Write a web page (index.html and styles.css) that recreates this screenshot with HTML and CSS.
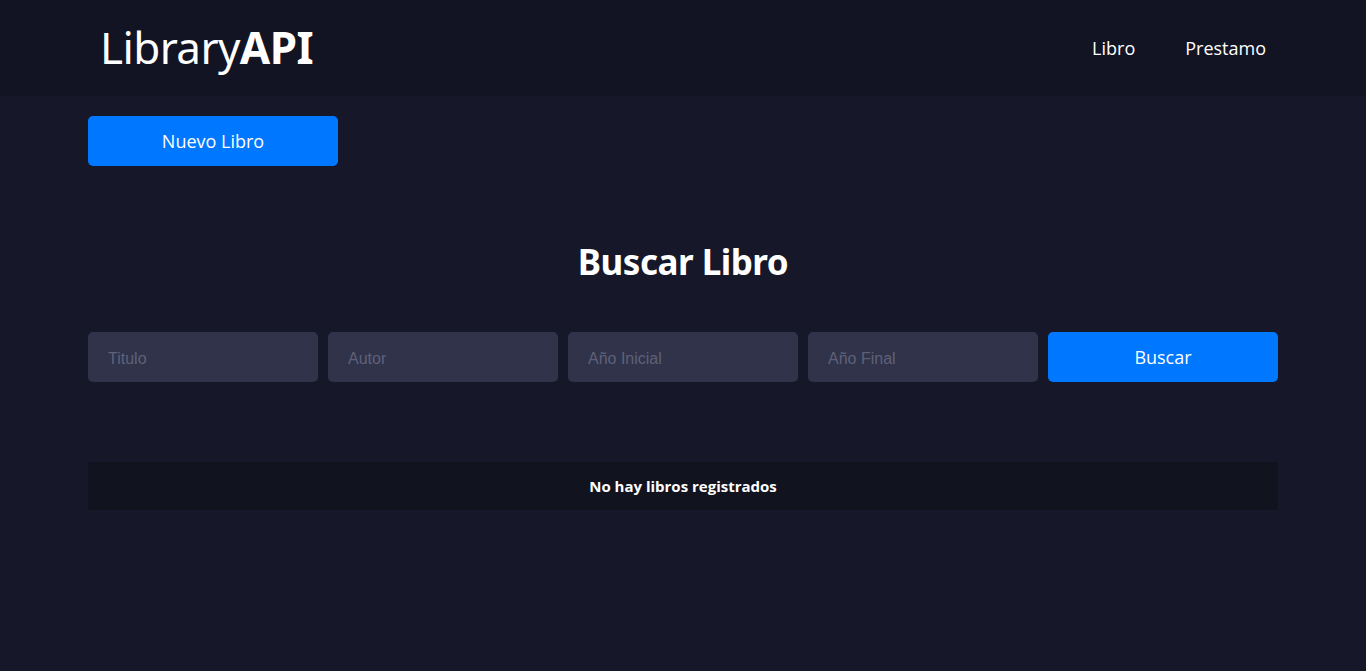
FILE: index.html
```html
<!DOCTYPE html>
<html lang="es">
<head>
<meta charset="utf-8">
<title>LibraryAPI</title>
<link rel="stylesheet" href="styles.css">
</head>
<body>
<header class="topbar">
  <div class="topbar-inner">
    <a class="brand" href="#">Library<b>API</b></a>
    <nav class="nav">
      <a href="#">Libro</a>
      <a href="#">Prestamo</a>
    </nav>
  </div>
</header>
<main class="container">
  <div class="actions">
    <button class="btn btn-primary btn-new">Nuevo Libro</button>
  </div>
  <h1 class="title">Buscar Libro</h1>
  <form class="search">
    <input class="field" type="text" placeholder="Titulo">
    <input class="field" type="text" placeholder="Autor">
    <input class="field" type="text" placeholder="Año Inicial">
    <input class="field" type="text" placeholder="Año Final">
    <button class="btn btn-primary" type="button">Buscar</button>
  </form>
  <table class="results">
    <tbody>
      <tr><td>No hay libros registrados</td></tr>
    </tbody>
  </table>
</main>
</body>
</html>
```
FILE: styles.css
```css
* { box-sizing: border-box; }
html, body { margin: 0; padding: 0; }
body {
  background: #161829;
  color: #fff;
  font-family: "Open Sans", "Liberation Sans", sans-serif;
  min-height: 671px;
}
.topbar {
  background: #121424;
  height: 96px;
}
.topbar-inner {
  width: 1190px;
  margin: 0 auto;
  height: 96px;
  display: flex;
  align-items: center;
  justify-content: space-between;
  padding: 0 12px 0 12px;
}
.brand {
  color: #fff;
  text-decoration: none;
  font-family: "Noto Sans", "Open Sans", sans-serif;
  font-size: 44px;
  font-weight: 400;
  letter-spacing: -0.6px;
  line-height: 1;
  margin-top: -2px;
}
.brand b { font-weight: 700; }
.nav {
  display: flex;
  gap: 50px;
}
.nav a {
  color: #fff;
  text-decoration: none;
  font-size: 18px;
}
.container {
  width: 1190px;
  margin: 0 auto;
  padding-top: 20px;
}
.actions { display: flex; }
.btn {
  border: 0;
  border-radius: 5px;
  height: 50px;
  font-family: "Open Sans", sans-serif;
  font-size: 18px;
  color: #fff;
  cursor: pointer;
  width: 100%;
}
.btn-primary { background: #0077ff; }
.btn-new { width: 250px; }
.title {
  margin: 72px 0 0;
  text-align: center;
  font-family: "Noto Sans", "Open Sans", sans-serif;
  font-size: 35px;
  font-weight: 700;
  line-height: 48px;
  letter-spacing: -0.5px;
}
.search {
  margin-top: 46px;
  display: grid;
  grid-template-columns: repeat(5, minmax(0, 1fr));
  gap: 10px;
}
.field {
  width: 100%;
  min-width: 0;
  height: 50px;
  border: 0;
  border-radius: 5px;
  background: #30334a;
  color: #fff;
  padding: 4px 20px 0;
  font-family: "Liberation Sans", Arial, sans-serif;
  font-size: 16px;
  outline: none;
}
.field::placeholder { color: #5e6178; }
.results {
  margin-top: 80px;
  width: 100%;
  border-collapse: collapse;
}
.results td {
  background: #11131f;
  height: 48px;
  text-align: center;
  font-weight: 700;
  font-size: 15px;
  padding: 0;
}
```
